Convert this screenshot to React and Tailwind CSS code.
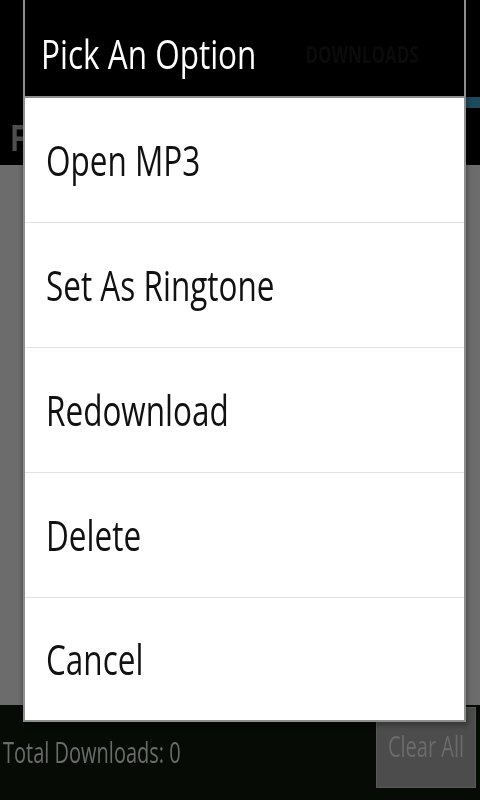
import React from "react";

const items = ["Open MP3", "Set As Ringtone", "Redownload", "Delete", "Cancel"];

export default function App() {
  return (
    <div
      className="relative w-[480px] h-[800px] overflow-hidden bg-[#6b6c6b]"
      style={{ fontFamily: '"Open Sans", "Noto Sans", sans-serif' }}
    >
      {/* background app */}
      <div className="flex flex-col h-full">
        <div className="h-[97px] bg-black flex items-center relative">
          <div className="flex w-full">
            <div className="flex-1" />
            <div className="flex-1 flex justify-center pt-[10px]">
              <span className="text-[17px] font-bold text-[#0f0f0f] inline-block scale-y-[1.4] ml-[4px]">DOWNLOADS</span>
            </div>
          </div>
        </div>
        <div className="h-[11px] bg-black flex">
          <div className="flex-1" />
          <div className="flex-1 bg-[#1d4a5c]" />
        </div>
        <div className="h-[57px] bg-black flex items-center pl-[10px]">
          <span className="text-[28px] font-bold text-[#4e4e4e] inline-block scale-y-[1.3]">F</span>
        </div>
        <div className="flex-1 bg-[#6b6c6b]" />
        <div className="h-[95px] bg-[#060b06] flex items-center justify-between pl-[3px] pr-[4px]">
          <span className="text-[20px] text-[#6a6b6a] inline-block scale-y-[1.42] origin-left">Total Downloads: 0</span>
          <div className="w-[100px] h-[81px] bg-[#4b4c4b] border border-[#575857] flex items-center justify-center mt-[-11px]">
            <span className="text-[20px] text-[#6a6b6a] inline-block scale-y-[1.42]">Clear All</span>
          </div>
        </div>
      </div>

      {/* dialog overlay */}
      <div className="absolute left-[22px] top-0 w-[446px] h-[726px] bg-black/25 blur-[2px]" />
      <div className="absolute left-[23px] top-0 w-[443px] border-x-2 border-b-2 border-[#8e8e8e] flex flex-col">
        <div className="h-[98px] border-b-2 border-[#8e8e8e] flex items-center pl-[16px] bg-transparent">
          <span className="text-[31.5px] text-white inline-block scale-y-[1.3] mt-[10px]">Pick An Option</span>
        </div>
        <div className="bg-white flex flex-col">
          {items.map((t, i) => (
            <div
              key={t}
              className={
                "flex items-center pl-[21px] " +
                (i < items.length - 1 ? "h-[125px] border-b border-[#e2e2e2]" : "h-[122px]")
              }
            >
              <span className="text-[31.5px] text-[#111] inline-block scale-y-[1.33]">{t}</span>
            </div>
          ))}
        </div>
      </div>
    </div>
  );
}
